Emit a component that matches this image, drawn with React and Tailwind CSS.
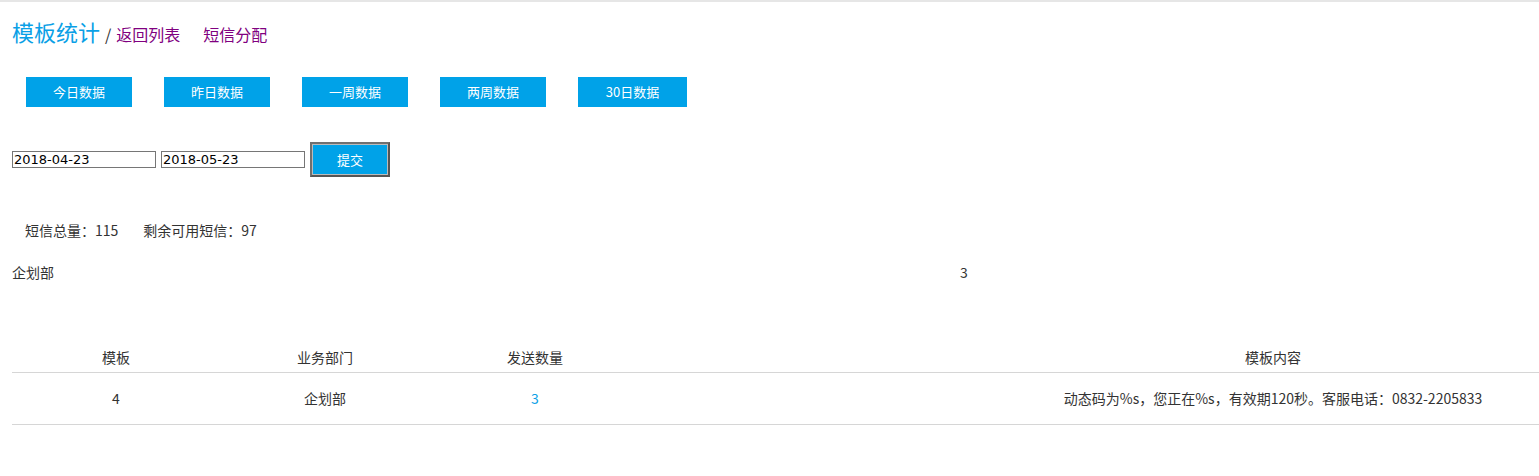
const FONT = { fontFamily: '"Microsoft YaHei", "Noto Sans CJK SC", sans-serif' };

const RANGES = ["今日数据", "昨日数据", "一周数据", "两周数据", "30日数据"];

export default function App() {
  return (
    <div className="w-[1539px] h-[476px] bg-white text-[#333] border-t-2 border-[#e6e6e6] overflow-hidden" style={FONT}>
      {/* header */}
      <div className="flex items-baseline pl-3 pt-[17px] h-[32px]">
        <span className="text-[22px] text-[#0aa0e6] leading-[24px]">模板统计</span>
        <span className="text-[16px] ml-[5px] mr-[5px]">/</span>
        <a className="text-[16px] text-[#800080]">返回列表</a>
        <a className="text-[16px] text-[#800080] ml-[23px]">短信分配</a>
      </div>

      {/* quick ranges */}
      <div className="flex gap-[32px] pl-[26px] mt-[43px]">
        {RANGES.map((r, i) => (
          <button
            key={r}
            className={`h-[30px] ${i === 4 ? "w-[109px]" : "w-[106px]"} bg-[#00a2e8] text-white text-[13px]`}
          >
            {r}
          </button>
        ))}
      </div>

      {/* date form */}
      <div className="flex items-center pl-3 mt-[35px] gap-[5px]">
        <input
          defaultValue="2018-04-23"
          className="w-[144px] h-[17px] border border-[#767676] px-[1px] text-[13px] text-black leading-none"
          style={{ fontFamily: '"DejaVu Sans", Verdana, sans-serif' }}
        />
        <input
          defaultValue="2018-05-23"
          className="w-[144px] h-[17px] border border-[#767676] px-[1px] text-[13px] text-black leading-none"
          style={{ fontFamily: '"DejaVu Sans", Verdana, sans-serif' }}
        />
        <button className="w-[80px] h-[35px] bg-[#00a2e8] text-white text-[13px] border-[3px] border-[#707070] border-b-[#555] border-r-[#555] outline outline-1 outline-[#bbb] -outline-offset-[3px]">
          提交
        </button>
      </div>

      {/* totals */}
      <div className="flex pl-[25px] mt-[43px] text-[14px] leading-[20px]">
        <span>短信总量：115</span>
        <span className="ml-[25px]">剩余可用短信：97</span>
      </div>

      <div className="flex pl-3 mt-[22px] text-[14px] leading-[20px]">
        <span className="w-[948px]">企划部</span>
        <span>3</span>
      </div>

      {/* table */}
      <div className="ml-3 mt-[61px] text-[14px]">
        <div className="grid grid-cols-[208px_210px_210px_367px_1fr] h-[30px] items-center text-center border-b border-[#d6d6d6]">
          <div>模板</div>
          <div>业务部门</div>
          <div>发送数量</div>
          <div></div>
          <div>模板内容</div>
        </div>
        <div className="grid grid-cols-[208px_210px_210px_367px_1fr] h-[52px] items-center text-center border-b border-[#d6d6d6]">
          <div>4</div>
          <div>企划部</div>
          <div className="text-[#0aa0e6]">3</div>
          <div></div>
          <div>动态码为%s，您正在%s，有效期120秒。客服电话：0832-2205833</div>
        </div>
      </div>
    </div>
  );
}
